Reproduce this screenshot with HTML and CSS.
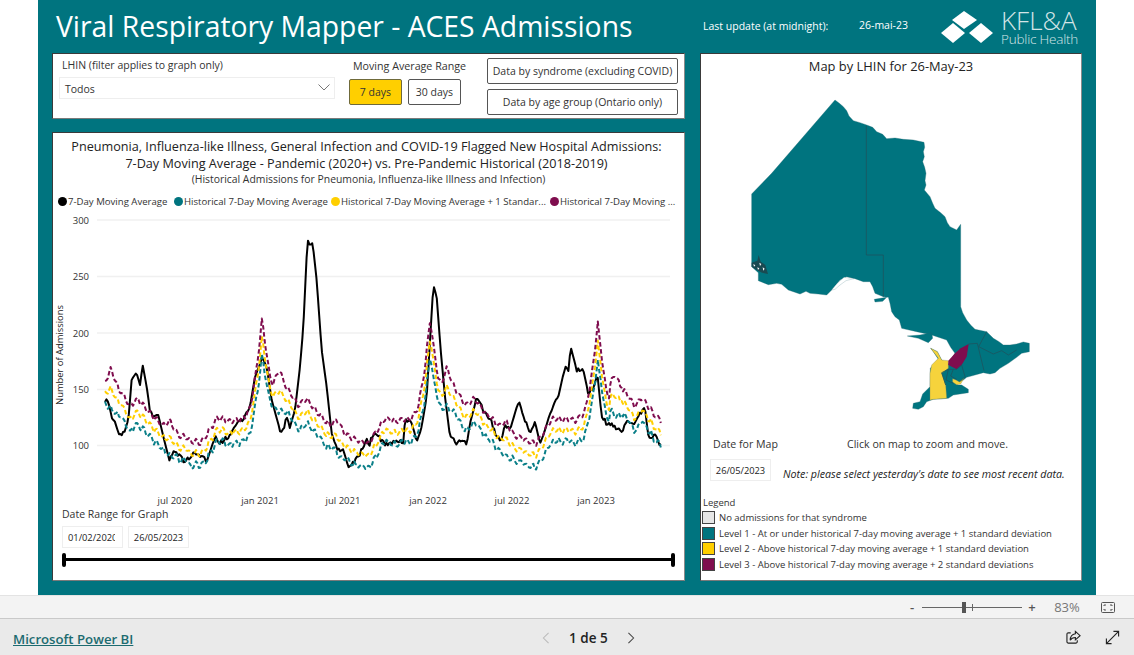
FILE: index.html
```html
<!DOCTYPE html>
<html lang="en">
<head>
<meta charset="utf-8">
<title>Viral Respiratory Mapper - ACES Admissions</title>
<link rel="stylesheet" href="styles.css">
</head>
<body>
<main class="stage">
  <div class="canvas">
    <header class="head">
      <h1 class="title">Viral Respiratory Mapper - ACES Admissions</h1>
      <span class="update">Last update (at midnight):</span>
      <span class="update-date">26-mai-23</span>
      <svg class="logo-mark" viewBox="0 0 52 32" aria-hidden="true">
        <polygon points="23,0 36,9 23,18 11,9"/>
        <polygon points="12,12 24,22 12,32 0,22"/>
        <polygon points="40,12 52,22 40,32 28,22"/>
      </svg>
      <div class="logo-text"><span class="logo-big">KFL&amp;A</span><span class="logo-small">Public Health</span></div>
    </header>
    <div class="board">
      <div class="left">
        <section class="panel filters">
          <div class="slicer">
            <div class="caption">LHIN (filter applies to graph only)</div>
            <div class="dropdown"><span>Todos</span>
              <svg class="chev" viewBox="0 0 12 7" aria-hidden="true"><path d="M.5.5 6 6 11.5.5"/></svg>
            </div>
          </div>
          <div class="range">
            <div class="caption center">Moving Average Range</div>
            <div class="range-btns"><span class="btn on">7 days</span><span class="btn">30 days</span></div>
          </div>
          <div class="navs">
            <span class="btn wide">Data by syndrome (excluding COVID)</span>
            <span class="btn wide">Data by age group (Ontario only)</span>
          </div>
        </section>
        <section class="panel chart">
          <h2 class="chart-title">Pneumonia, Influenza-like Illness, General Infection and COVID-19 Flagged New Hospital Admissions:<br>7-Day Moving Average - Pandemic (2020+) vs. Pre-Pandemic Historical (2018-2019)</h2>
          <p class="chart-sub">(Historical Admissions for Pneumonia, Influenza-like Illness and Infection)</p>
          <ul class="series">
            <li class="s1"><i class="dot black"></i>7-Day Moving Average</li>
            <li class="s2"><i class="dot teal"></i>Historical 7-Day Moving Average</li>
            <li class="s3"><i class="dot gold"></i>Historical 7-Day Moving Average + 1 Standar...</li>
            <li class="s4"><i class="dot plum"></i>Historical 7-Day Moving ...</li>
          </ul>
          <svg id="plot" class="plot" viewBox="53 212 631 296">
            <g class="grid">
              <line x1="97" x2="670" y1="220" y2="220"/>
              <line x1="97" x2="670" y1="276.5" y2="276.5"/>
              <line x1="97" x2="670" y1="333" y2="333"/>
              <line x1="97" x2="670" y1="389.5" y2="389.5"/>
              <line x1="97" x2="670" y1="445.5" y2="445.5"/>
            </g>
            <g class="ylab">
              <text x="89" y="223.500">300</text>
              <text x="89" y="280">250</text>
              <text x="89" y="336.500">200</text>
              <text x="89" y="393">150</text>
              <text x="89" y="449">100</text>
            </g>
            <text class="ytitle" transform="translate(63 355) rotate(-90)">Number of Admissions</text>
            <g class="xlab">
              <text x="175" y="504">jul 2020</text>
              <text x="260" y="504">jan 2021</text>
              <text x="343" y="504">jul 2021</text>
              <text x="428" y="504">jan 2022</text>
              <text x="512" y="504">jul 2022</text>
              <text x="596" y="504">jan 2023</text>
            </g>
            <g id="lines"></g>
          </svg>
          <div class="caption daterange">Date Range for Graph</div>
          <div class="dates"><span class="datebox clip"><span class="clip-inner">01/02/2020</span></span><span class="datebox">26/05/2023</span></div>
          <div class="track"><i class="handle"></i><i class="handle"></i></div>
        </section>
      </div>
      <section class="panel mappanel">
        <h2 class="map-title">Map by LHIN for 26-May-23</h2>
        <svg class="map" viewBox="3 0 1140 1020" aria-label="Map of Ontario by LHIN">
          <path class="land" d="M405 30 418 40 430 50 440 62 447 78 460 92 480 98 500 105 518 112 530 125 548 133 560 146 585 144 610 148 640 150 672 157 674 172 670 185 673 200 668 215 674 232 678 250 675 272 678 285 673 300 690 320 698 340 705 355 722 368 735 380 742 398 750 410 770 420 782 403 782 650 788 668 800 690 812 705 825 718 860 725 880 745 897 755 910 765 930 765 950 762 970 756 988 760 988 785 965 790 950 802 925 820 900 835 885 848 870 852 850 848 800 862 790 870 770 885 785 885 805 898 805 908 760 915 745 925 700 928 680 935 670 950 655 958 638 955 640 940 660 935 668 912 690 890 691 835 715 808 700 785 692 775 712 785 725 810 745 822 765 790 752 772 740 750 695 735 650 725 605 715 598 690 585 680 575 665 570 640 565 622 550 620 525 610 518 590 510 575 490 575 465 566 440 560 420 570 395 600 380 615 355 612 330 610 318 604 300 612 280 605 265 600 245 583 230 580 205 584 175 572 175 548 155 530 155 312 215 250Z"/>
          <path class="land" d="M622 738 660 735 695 728 698 745 685 758 655 745Z"/>
          <path class="land" d="M523 628 560 622 548 634 525 636Z"/>
          <path class="nwlake" d="M155 518 172 512 176 495 182 515 196 525 204 552 186 548 170 540 155 530Z"/>
          <path class="lakes" d="M160 522 166 526 162 530ZM178 518 184 522 180 528ZM188 532 194 536 190 542ZM172 532 178 535 174 540Z"/>
          <path class="lakeshore" d="M395 600 410 582 432 562 462 566 438 572 420 585 405 598Z"/>
          <path class="gold" d="M692 775 712 785 725 810 745 812 745 835 725 850 737 885 740 925 700 928 690 930 690 850 695 825 715 805 700 785Z"/>
          <path class="gold" d="M758 866 768 870 778 876 792 864 782 882 770 884 758 876Z"/>
          <path class="plum" d="M745 825 745 812 765 790 782 775 806 762 800 800 785 825 770 838Z"/>
          <path class="border" d="M499 108V495H550V620"/>
          <path class="border" d="M806 762 832 760 852 842M836 770 860 725M836 770 880 792 905 782 925 795 950 780"/>
          <path class="border" d="M745 838 725 848 737 885M745 838 760 838 770 838 785 825 795 860 780 875M760 838 752 858 770 868M745 838 738 870 760 880"/>
        </svg>
        <div class="map-row one">
          <span class="caption big">Date for Map</span>
          <span class="caption big">Click on map to zoom and move.</span>
        </div>
        <div class="map-row two">
          <span class="datebox">26/05/2023</span>
          <em class="note">Note: please select yesterday's date to see most recent data.</em>
        </div>
        <div class="legend">
          <div class="legend-head">Legend</div>
          <div class="legend-row"><i class="swatch none"></i>No admissions for that syndrome</div>
          <div class="legend-row"><i class="swatch l1"></i>Level 1 - At or under historical 7-day moving average + 1 standard deviation</div>
          <div class="legend-row"><i class="swatch l2"></i>Level 2 - Above historical 7-day moving average + 1 standard deviation</div>
          <div class="legend-row"><i class="swatch l3"></i>Level 3 - Above historical 7-day moving average + 2 standard deviations</div>
        </div>
      </section>
    </div>
  </div>
</main>
<div class="status">
  <span class="zoom-sign">-</span>
  <span class="zoom-track"><i class="zoom-tick"></i><i class="zoom-thumb"></i></span>
  <span class="zoom-sign">+</span>
  <span class="zoom-val">83%</span>
  <svg class="fit" viewBox="0 0 14 11" aria-hidden="true"><rect x=".5" y=".5" width="13" height="10" rx="1"/><path d="M3 4V3H5M11 4V3H9M3 7V8H5M11 7V8H9"/></svg>
</div>
<footer class="foot">
  <a class="pbi" href="#">Microsoft Power BI</a>
  <div class="pager">
    <svg class="pg off" viewBox="0 0 8 14" aria-hidden="true"><path d="M7 1 1 7l6 6"/></svg>
    <span class="pg-text">1 de 5</span>
    <svg class="pg" viewBox="0 0 8 14" aria-hidden="true"><path d="M1 1l6 6-6 6"/></svg>
  </div>
  <div class="foot-icons">
    <svg class="ficon" viewBox="0 0 16 16" aria-hidden="true"><path d="M5 3H2.500A1.500 1.500 0 0 0 1 4.500v8A1.500 1.500 0 0 0 2.500 14h8a1.500 1.500 0 0 0 1.500-1.500V11"/><path d="M10 1.500 15 6l-5 4.500V8C7.500 8 5.500 9 4.500 11c0-4 2-6.500 5.500-7Z"/></svg>
    <svg class="ficon" viewBox="0 0 16 16" aria-hidden="true"><path d="M1.500 9V14.500H7M14.500 7V1.500H9M1.500 14.500l13-13"/></svg>
  </div>
</footer>
<script src="chart.js"></script>
</body>
</html>
```
FILE: styles.css
```css
* { box-sizing: border-box; }
html, body { margin: 0; height: 100%; }
body {
  width: 1134px; height: 655px; overflow: hidden; background: #fff; color: #222;
  font-family: "Open Sans", "Noto Sans", sans-serif; font-size: 10.5px;
  display: flex; flex-direction: column;
}
.stage { height: 595px; padding: 0 38px; }
.canvas { height: 595px; background: #00747f; padding: 0 14px; }

.head { height: 53px; display: flex; align-items: center; color: #fff; }
.title { margin: 0 0 1px 4px; width: 647px; font-size: 28.3px; font-weight: 400; white-space: nowrap; }
.update { width: 156px; font-size: 10.5px; margin-bottom: 1px; }
.update-date { width: 82px; font-size: 10.5px; margin-bottom: 3px; }
.logo-mark { width: 52px; height: 32px; fill: #fff; margin: 1px 8px 0 0; flex: none; }
.logo-text { display: flex; flex-direction: column; color: #d4e5e7; font-weight: 300; }
.logo-big { font-size: 26px; line-height: 24px; }
.logo-small { font-size: 13.5px; line-height: 14px; letter-spacing: -.2px; }

.board { display: grid; grid-template-columns: 633px 382px; column-gap: 15px; height: 528px; }
.left { display: flex; flex-direction: column; gap: 13px; }
.panel { background: #fff; border: 1px solid #3a3a3a; border-right-color: #8b8b8b; border-bottom-color: #7a7a7a; }

.filters { height: 66px; display: flex; padding: 0 6px; }
.caption { font-size: 10.5px; color: #333; }
.center { text-align: center; }
.slicer { width: 276px; }
.slicer .caption { padding: 4px 3px 0; height: 23px; }
.dropdown {
  height: 22px; border: 1px solid #eee; display: flex; align-items: center;
  justify-content: space-between; padding: 2px 4px 0 5px; color: #333;
}
.chev { width: 12px; height: 7px; fill: none; stroke: #777; stroke-width: 1; margin-bottom: 3px; }
.range { width: 118px; margin-left: 14px; }
.range .caption { padding: 5px 0 0 3px; height: 25px; font-size: 10.7px; }
.range-btns { display: flex; gap: 6px; }
.btn {
  display: flex; align-items: center; justify-content: center; height: 26px; width: 53px;
  border: 1px solid #555; border-radius: 2px; background: #fff; color: #333; font-size: 10.5px;
}
.btn.on { background: #ffcf00; border-color: #6f6a3a; }
.navs { margin-left: 20px; padding-top: 4px; display: flex; flex-direction: column; gap: 5px; }
.btn.wide { width: 191px; }

.chart { height: 449px; padding-top: 5px; }
.chart-title { margin: 0; padding-right: 4px; text-align: center; font-size: 12.65px; line-height: 17px; font-weight: 400; color: #222; white-space: nowrap; }
.chart-sub { margin: 0; text-align: center; font-size: 10.4px; line-height: 15px; color: #333; }
.series { list-style: none; margin: 7px 0 0; padding: 0 0 0 5px; display: flex; height: 14px; font-size: 9.6px; color: #333; white-space: nowrap; }
.series li { display: flex; align-items: center; gap: 1px; }
.s1 { width: 116px; } .s2 { width: 157px; } .s3 { width: 219px; }
.s4 { width: 128px; overflow: hidden; }
.dot { width: 9px; height: 9px; border-radius: 50%; flex: none; }
.black { background: #000; } .teal { background: #00747f; } .gold { background: #ffcf00; } .plum { background: #7f0d4e; }
.plot { display: block; width: 631px; height: 296px; margin-top: 4px; }
.grid line { stroke: #f0f0f0; stroke-width: 1.500; }
.ylab text { font-size: 9.500px; text-anchor: end; fill: #333; font-family: "Open Sans", sans-serif; }
.xlab text { font-size: 9.500px; text-anchor: middle; fill: #333; font-family: "Open Sans", sans-serif; }
.ytitle { font-size: 9.400px; text-anchor: middle; fill: #222; font-family: "Open Sans", sans-serif; }
.daterange { padding: 0 0 0 9px; height: 18px; line-height: 13px; }
.dates { display: flex; gap: 5px; padding-left: 9px; }
.datebox {
  display: flex; align-items: center; justify-content: center; width: 61px; height: 22px;
  border: 1px solid #eee; font-size: 9.300px; color: #222; white-space: nowrap; flex: none;
}
.clip { justify-content: flex-start; padding-left: 5px; }
.clip-inner { display: block; width: 47px; overflow: hidden; }
.track { height: 3px; background: #000; margin: 10px 9px 0 9px; display: flex; justify-content: space-between; align-items: center; }
.handle { width: 4px; height: 14px; background: #000; border-radius: 2px; }

.mappanel { height: 528px; }
.map-title { margin: 0; height: 36px; padding-top: 3px; text-align: center; font-size: 12.9px; line-height: 18px; font-weight: 400; color: #222; }
.map { display: block; width: 380px; height: 340px; }
.land { fill: #00747f; stroke: #1d6670; stroke-width: 1; }
.nwlake { fill: #1a4a52; }
.lakes { fill: #fff; }
.lakeshore { fill: #fff; stroke: #1d6670; stroke-width: .6; }
.map .gold { fill: #f6d33c; stroke: #7f8a5a; stroke-width: 1; }
.map .plum { fill: #7f0d4e; }
.border { fill: none; stroke: #1c5560; stroke-width: 2.500; }
.map-row { display: flex; }
.one { padding: 7px 0 0 12px; height: 23px; }
.big { font-size: 10.6px; }
.one .big:first-child { width: 134px; }
.two { padding: 6px 0 0 9px; align-items: flex-start; height: 29px; }
.note { font-size: 10.7px; line-height: 14px; margin: 8px 0 0 12px; white-space: nowrap; color: #222; }
.legend { margin: 15px 0 0 1px; font-size: 9.500px; color: #333; }
.legend-head { height: 11px; line-height: 11px; padding-left: 1px; margin-bottom: 2px; }
.legend-row { display: flex; align-items: center; gap: 4px; height: 15.500px; white-space: nowrap; }
.swatch { width: 13px; height: 13px; border: 1px solid #444; flex: none; }
.none { background: #e6e6e6; } .l1 { background: #00747f; } .l2 { background: #ffcf00; } .l3 { background: #7f0d4e; }

.status {
  height: 24px; background: #f3f3f3; border-top: 1px solid #e3e3e3; border-bottom: 1px solid #c9c9c9;
  display: flex; align-items: center; justify-content: flex-end; padding-right: 19px; color: #555;
}
.zoom-sign { font-size: 13px; width: 10px; text-align: center; font-weight: 600; }
.zoom-track { position: relative; width: 100px; height: 1px; background: #666; margin: 0 5px; }
.zoom-thumb { position: absolute; left: 40px; top: -5px; width: 4px; height: 11px; background: #555; }
.zoom-tick { position: absolute; left: 50px; top: -3px; width: 1px; height: 7px; background: #666; }
.zoom-val { width: 42px; margin-left: 9px; text-align: center; font-size: 13px; color: #777; }
.fit { width: 14px; height: 11px; margin-left: 13px; fill: none; stroke: #555; stroke-width: 1; }

.foot { height: 36px; background: #eaeaea; display: flex; align-items: center; padding: 3px 14px 0 13px; }
.pbi { font-size: 13.2px; font-weight: 600; color: #1c6b70; width: 520px; }
.pager { display: flex; align-items: center; gap: 19px; width: 100px; margin-left: 9px; margin-top: -2px; }
.pg { width: 8px; height: 12px; fill: none; stroke: #444; stroke-width: 1.200; flex: none; }
.pg.off { stroke: #bbb; }
.pg-text { font-size: 13.5px; font-weight: 600; color: #222; white-space: nowrap; }
.foot-icons { margin-left: auto; display: flex; gap: 24px; margin-top: -2px; }
.ficon { width: 15px; height: 15px; fill: none; stroke: #222; stroke-width: 1.200; }
```
FILE: chart.js
```js
(function () {
  var NS = 'http://www.w3.org/2000/svg';
  var seed = 7;
  function rnd() { seed = (seed * 16807) % 2147483647; return seed / 2147483647; }
  function interp(k, x) {
    for (var i = 1; i < k.length; i++) {
      if (x <= k[i][0]) {
        var a = k[i - 1], b = k[i];
        return a[1] + (b[1] - a[1]) * (x - a[0]) / (b[0] - a[0]);
      }
    }
    return k[k.length - 1][1];
  }
  var z4 = [165,570,175,575,185,620,195,635,205,670,220,670,235,630,245,510,260,490,270,525,278,465,290,530,300,600,310,620,325,615,340,680,358,750,370,720,385,735,405,755,425,735,445,730,470,755,495,680,510,700,540,675,560,640,585,620,600,590,615,500,635,445,650,470,665,570,690,660,700,665,710,620,720,650,735,600,750,470,760,350,772,95,788,100,800,210,815,420,830,530,845,670,860,715,880,720,895,770,915,750,930,730,950,685,960,710];
  var z5 = [0,690,20,670,40,700,60,705,80,690,100,700,105,630,125,640,140,690,155,650,170,560,190,225,200,260,212,420,225,560,240,680,260,700,275,685,290,705,300,640,320,565,340,600,360,625,380,680,395,690,405,640,420,660,445,575,465,630,480,670,495,635,510,700,525,660,540,610,565,560,585,470,595,485,602,410,620,480,640,480,655,550,672,530,682,490,695,620,710,640,735,650,755,665,770,635,790,640,810,610,825,595,835,680,860,680,868,705,878,690];
  var black = [], i;
  for (i = 0; i < z4.length; i += 2) black.push([50 + z4[i] / 3, 210 + z4[i + 1] / 3]);
  for (i = 0; i < z5.length; i += 2) black.push([370 + z5[i] / 3, 210 + z5[i + 1] / 3]);

  var tealYear = [[0,405],[8,410],[17,418],[25,430],[33,423],[45,438],[58,450],[72,458],[88,465],[95,468],[102,457],[112,442],[122,443],[135,442],[145,433],[152,397],[157,357],[165,403],[168,405]];
  var spread = [[0,22],[6,40],[14,25],[45,24],[58,24],[65,34],[72,24],[95,24],[140,22],[150,28],[157,37],[165,25],[168,22]];

  var step = 1.4, pts = { k: [], t: [], y: [], p: [] };
  var walk = 0;
  for (var x = 105; x <= 662; x += step) {
    var ph = (x - 105) % 168;
    var yr = Math.floor((x - 105 + 11) / 168);
    var t = interp(tealYear, ph);
    if (yr === 3 && ph > 140) t += (ph - 140) * 0.45;
    if (yr >= 3 && ph < 12) t += 4;
    var d = interp(spread, ph);
    walk = walk * 0.5 + (rnd() - 0.5) * 6.5;
    var wig = Math.sin(x / 1.05) * 2.4;
    t += walk * 0.7 + wig;
    pts.t.push([x, t]);
    pts.y.push([x, t - d * 0.5 - walk * 0.2]);
    pts.p.push([x, t - d - walk * 0.4]);
    var spike = Math.abs(interp(black, x + step) - interp(black, x)) > 4;
    pts.k.push([x, interp(black, x) + (spike ? 0 : (rnd() - 0.5) * 4.4)]);
  }
  function add(list, color, dash) {
    var el = document.createElementNS(NS, 'path');
    el.setAttribute('d', 'M' + list.map(function (p) { return p[0].toFixed(1) + ' ' + p[1].toFixed(1); }).join('L'));
    el.setAttribute('fill', 'none');
    el.setAttribute('stroke', color);
    el.setAttribute('stroke-width', '2');
    el.setAttribute('stroke-linejoin', 'round');
    if (dash) el.setAttribute('stroke-dasharray', dash);
    document.getElementById('lines').appendChild(el);
  }
  add(pts.k, '#000');
  add(pts.t, '#0a7f88', '4.500 2.500');
  add(pts.y, '#ffcf00', '4.500 2.500');
  add(pts.p, '#7f0d4e', '4.500 2.500');
})();
```
